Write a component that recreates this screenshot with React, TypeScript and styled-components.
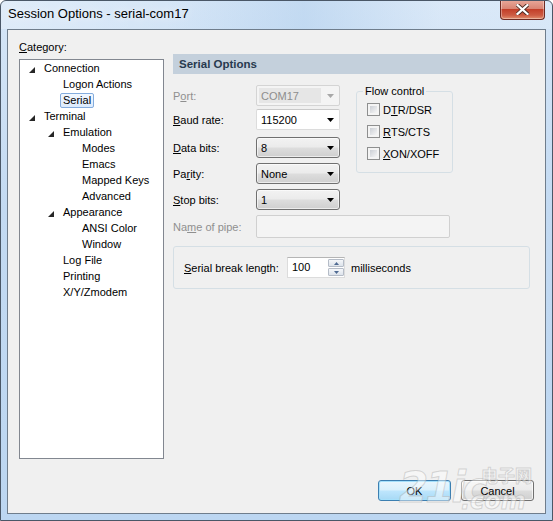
import React from 'react';
import styled, { createGlobalStyle, css } from 'styled-components';

const GlobalStyle = createGlobalStyle`
  html, body {
    margin: 0;
    padding: 0;
    background: #ffffff;
  }
  body {
    font-family: "Liberation Sans", Arial, sans-serif;
    font-size: 11px;
    color: #000000;
  }
  * {
    box-sizing: border-box;
  }
`;

const Window = styled.div`
  position: relative;
  width: 553px;
  height: 521px;
  display: flex;
  flex-direction: column;
  border: 1px solid #4a5767;
  border-radius: 6px 6px 0 0;
  background: linear-gradient(180deg, #d6e6f7 0%, #c3daf2 40%, #bcd6f1 100%);
  overflow: hidden;
`;

const TitleBar = styled.div`
  height: 28px;
  display: flex;
  align-items: flex-start;
  padding-left: 7px;
  background: linear-gradient(90deg, rgba(255, 255, 255, 0.25) 0%, rgba(255, 255, 255, 0) 30%, rgba(160, 196, 232, 0.35) 55%, rgba(255, 255, 255, 0.1) 80%);
`;

const Title = styled.span`
  margin-top: 5px;
  font-size: 13px;
  color: #000000;
  text-shadow: 0 0 8px rgba(255, 255, 255, 0.9);
`;

const CloseButton = styled.div`
  margin-left: auto;
  margin-right: 7px;
  margin-top: -1px;
  width: 45px;
  height: 20px;
  display: flex;
  align-items: center;
  justify-content: center;
  border: 1px solid #6e2a22;
  border-top: none;
  border-radius: 0 0 4px 4px;
  background: linear-gradient(180deg, #e9a99b 0%, #d98574 45%, #c33f29 50%, #cd5b43 80%, #e28f6e 100%);
  box-shadow: inset 0 0 0 1px rgba(255, 255, 255, 0.35);
`;

const Client = styled.div`
  flex: 1;
  margin: 0 6px 6px 6px;
  border: 1px solid #6f7d8c;
  background: #f0f0f0;
  display: flex;
  flex-direction: column;
  padding: 10px 11px 12px 11px;
`;

const Main = styled.div`
  display: flex;
  gap: 9px;
`;

const LeftCol = styled.div`
  width: 145px;
  display: flex;
  flex-direction: column;
`;

const CategoryLabel = styled.div`
  height: 14px;
  line-height: 14px;
  margin-bottom: 5px;
`;

const Tree = styled.div`
  height: 400px;
  border: 1px solid #828790;
  background: #ffffff;
`;

const TreeRow = styled.div<{ $level: number }>`
  height: 16px;
  display: flex;
  align-items: center;
  padding-left: ${p => 24 + p.$level * 19}px;
  position: relative;
`;

const Expander = styled.svg<{ $level: number }>`
  position: absolute;
  left: ${p => 9 + p.$level * 19}px;
  top: 7px;
`;

const TreeText = styled.span<{ $selected?: boolean }>`
  display: inline-block;
  height: 15px;
  line-height: 13px;
  padding: 0 2px;
  margin-left: -3px;
  border: 1px solid transparent;
  border-radius: 2px;
  white-space: nowrap;
  ${p =>
    p.$selected &&
    css`
      border-color: #84acdd;
      background: linear-gradient(180deg, #f2f8ff 0%, #dcebfd 100%);
    `}
`;

const RightCol = styled.div`
  width: 357px;
  margin-top: 14px;
  display: flex;
  flex-direction: column;
`;

const Header = styled.div`
  height: 20px;
  line-height: 20px;
  padding-left: 6px;
  background: #c4d0dc;
  font-weight: bold;
  font-size: 11.5px;
  color: #283a4f;
`;

const TopSection = styled.div`
  display: flex;
  align-items: flex-start;
  margin-top: 11px;
`;

const Form = styled.div`
  width: 167px;
  display: flex;
  flex-direction: column;
`;

const FieldRow = styled.div<{ $mt?: number }>`
  display: flex;
  align-items: center;
  margin-top: ${p => p.$mt ?? 0}px;
`;

const Label = styled.span<{ $disabled?: boolean; $width?: number }>`
  width: ${p => p.$width ?? 83}px;
  flex-shrink: 0;
  color: ${p => (p.$disabled ? '#8f8f8f' : '#000000')};
  white-space: nowrap;
`;

const Key = styled.span`
  text-decoration: underline;
  text-underline-offset: 1px;
`;

const Combo = styled.div<{ $variant: 'disabled' | 'edit' | 'button' }>`
  width: 84px;
  height: 21px;
  display: flex;
  align-items: center;
  position: relative;
  padding-left: 4px;
  ${p =>
    p.$variant === 'disabled' &&
    css`
      border: 1px solid #d4d4d4;
      border-radius: 2px;
      background: #f4f4f4;
      color: #8d8d8d;
      padding-left: 2px;
    `}
  ${p =>
    p.$variant === 'edit' &&
    css`
      border: 1px solid #dcdcdc;
      border-top-color: #c9c9c9;
      border-radius: 2px;
      background: #ffffff;
    `}
  ${p =>
    p.$variant === 'button' &&
    css`
      border: 1px solid #707070;
      border-radius: 3px;
      background: linear-gradient(180deg, #f2f2f2 0%, #ebebeb 48%, #dddddd 52%, #cfcfcf 100%);
      box-shadow: inset 0 0 0 1px rgba(255, 255, 255, 0.6);
    `}
`;

const DisabledText = styled.span`
  display: flex;
  align-items: center;
  width: 62px;
  height: 15px;
  padding-left: 2px;
  background: #e6e6e6;
`;

const Arrow = styled.svg`
  position: absolute;
  right: 5px;
  top: 8px;
`;

const PipeInput = styled.div`
  width: 194px;
  height: 23px;
  border: 1px solid #d0d0d0;
  border-radius: 2px;
  background: #f4f4f4;
`;

const FlowGroup = styled.fieldset`
  width: 97px;
  height: 88px;
  margin: 0 0 0 16px;
  padding: 5px 0 0 10px;
  border: 1px solid #d5dfe5;
  border-radius: 3px;
  display: flex;
  flex-direction: column;
`;

const Legend = styled.legend`
  padding: 0 2px;
  margin-left: -4px;
  line-height: 13px;
`;

const CheckRow = styled.label<{ $mt?: number }>`
  display: flex;
  align-items: center;
  height: 13px;
  margin-top: ${p => p.$mt ?? 0}px;
`;

const CheckBox = styled.span`
  width: 13px;
  height: 13px;
  border: 1px solid #8e8f8f;
  padding: 2px;
  margin-right: 3px;
  background: #f4f4f4;
  &::after {
    content: '';
    display: block;
    width: 100%;
    height: 100%;
    background: linear-gradient(135deg, #cbcfd5 0%, #e9eaec 70%, #f6f6f6 100%);
  }
`;

const PipeRow = styled(FieldRow)`
  margin-top: 5px;
`;

const BreakGroup = styled.div`
  margin-top: 8px;
  height: 43px;
  border: 1px solid #d5dfe5;
  border-radius: 3px;
  display: flex;
  align-items: center;
  padding-left: 10px;
`;

const SpinBox = styled.div`
  width: 58px;
  height: 21px;
  display: flex;
  border: 1px solid #dcdcdc;
  border-top-color: #b5b5b5;
  background: #ffffff;
`;

const SpinText = styled.span`
  flex: 1;
  padding-left: 4px;
  line-height: 19px;
`;

const SpinButtons = styled.div`
  width: 16px;
  display: flex;
  flex-direction: column;
  gap: 1px;
  padding: 1px 0 1px 0;
`;

const SpinButton = styled.div`
  flex: 1;
  display: flex;
  align-items: center;
  justify-content: center;
  border: 1px solid #b5bcc7;
  border-radius: 1px;
  background: linear-gradient(180deg, #f5f7fa 0%, #dde3eb 100%);
`;

const Units = styled.span`
  margin-left: 6px;
`;

const ButtonRow = styled.div`
  margin-top: 21px;
  display: flex;
  justify-content: flex-end;
  gap: 10px;
`;

const DialogButton = styled.div<{ $default?: boolean }>`
  width: 73px;
  height: 21px;
  display: flex;
  align-items: center;
  justify-content: center;
  border-radius: 3px;
  ${p =>
    p.$default
      ? css`
          border: 1px solid #3c7fb1;
          background: linear-gradient(180deg, #e9f6fd 0%, #d9f0fc 48%, #bee6fd 52%, #a7d9f5 100%);
          box-shadow: inset 0 0 0 1px #a6e0fb;
        `
      : css`
          border: 1px solid #707070;
          background: linear-gradient(180deg, #f2f2f2 0%, #ebebeb 48%, #dddddd 52%, #cfcfcf 100%);
          box-shadow: inset 0 0 0 1px rgba(255, 255, 255, 0.7);
        `}
`;

/* faint site watermark lying over the bottom-right corner */
const Watermark = styled.div`
  position: absolute;
  left: 398px;
  top: 458px;
  width: 154px;
  height: 62px;
  pointer-events: none;
  white-space: nowrap;
  color: rgba(255, 255, 255, 0.45);
  -webkit-text-stroke: 1px rgba(170, 170, 170, 0.45);
  font-family: "DejaVu Sans", sans-serif;
  font-weight: bold;
`;

const WmBig = styled.span`
  position: absolute;
  left: 0;
  top: 4px;
  font-size: 42px;
  font-style: italic;
  letter-spacing: -3px;
`;

const WmCn = styled.span`
  position: absolute;
  left: 82px;
  top: 3px;
  font-size: 17px;
  font-family: "Noto Sans CJK SC", sans-serif;
`;

const WmCom = styled.span`
  position: absolute;
  left: 62px;
  top: 28px;
  font-size: 24px;
  font-style: italic;
`;

type Node = { label: string; level: number; expanded?: boolean; selected?: boolean };

const nodes: Node[] = [
  { label: 'Connection', level: 0, expanded: true },
  { label: 'Logon Actions', level: 1 },
  { label: 'Serial', level: 1, selected: true },
  { label: 'Terminal', level: 0, expanded: true },
  { label: 'Emulation', level: 1, expanded: true },
  { label: 'Modes', level: 2 },
  { label: 'Emacs', level: 2 },
  { label: 'Mapped Keys', level: 2 },
  { label: 'Advanced', level: 2 },
  { label: 'Appearance', level: 1, expanded: true },
  { label: 'ANSI Color', level: 2 },
  { label: 'Window', level: 2 },
  { label: 'Log File', level: 1 },
  { label: 'Printing', level: 1 },
  { label: 'X/Y/Zmodem', level: 1 },
];

const DownArrow = ({ color = '#000' }: { color?: string }) => (
  <Arrow width="7" height="4" viewBox="0 0 7 4">
    <polygon points="0,0 7,0 3.5,4" fill={color} />
  </Arrow>
);

const App: React.FC = () => {
  return (
    <>
      <GlobalStyle />
      <Window>
        <TitleBar>
          <Title>Session Options - serial-com17</Title>
          <CloseButton>
            <svg width="13" height="11" viewBox="0 0 13 11">
              <path
                d="M1.5 1 L11.5 10 M11.5 1 L1.5 10"
                stroke="#4b2a22"
                strokeWidth="4"
                strokeLinecap="square"
              />
              <path
                d="M1.5 1 L11.5 10 M11.5 1 L1.5 10"
                stroke="#ffffff"
                strokeWidth="2.2"
                strokeLinecap="square"
              />
            </svg>
          </CloseButton>
        </TitleBar>
        <Client>
          <Main>
            <LeftCol>
              <CategoryLabel>
                <Key>C</Key>ategory:
              </CategoryLabel>
              <Tree>
                {nodes.map(n => (
                  <TreeRow key={n.label} $level={n.level}>
                    {n.expanded && (
                      <Expander $level={n.level} width="6" height="6" viewBox="0 0 6 6">
                        <polygon points="6,0 6,6 0,6" fill="#262626" />
                      </Expander>
                    )}
                    <TreeText $selected={n.selected}>{n.label}</TreeText>
                  </TreeRow>
                ))}
              </Tree>
            </LeftCol>
            <RightCol>
              <Header>Serial Options</Header>
              <TopSection>
                <Form>
                  <FieldRow>
                    <Label $disabled>
                      P<Key>o</Key>rt:
                    </Label>
                    <Combo $variant="disabled">
                      <DisabledText>COM17</DisabledText>
                      <DownArrow color="#a8a8a8" />
                    </Combo>
                  </FieldRow>
                  <FieldRow $mt={3}>
                    <Label>
                      <Key>B</Key>aud rate:
                    </Label>
                    <Combo $variant="edit">
                      115200
                      <DownArrow />
                    </Combo>
                  </FieldRow>
                  <FieldRow $mt={7}>
                    <Label>
                      <Key>D</Key>ata bits:
                    </Label>
                    <Combo $variant="button">
                      8
                      <DownArrow />
                    </Combo>
                  </FieldRow>
                  <FieldRow $mt={5}>
                    <Label>
                      Pa<Key>r</Key>ity:
                    </Label>
                    <Combo $variant="button">
                      None
                      <DownArrow />
                    </Combo>
                  </FieldRow>
                  <FieldRow $mt={5}>
                    <Label>
                      <Key>S</Key>top bits:
                    </Label>
                    <Combo $variant="button">
                      1
                      <DownArrow />
                    </Combo>
                  </FieldRow>
                </Form>
                <FlowGroup>
                  <Legend>Flow control</Legend>
                  <CheckRow $mt={0}>
                    <CheckBox />
                    D<Key>T</Key>R/DSR
                  </CheckRow>
                  <CheckRow $mt={9}>
                    <CheckBox />
                    <Key>R</Key>TS/CTS
                  </CheckRow>
                  <CheckRow $mt={9}>
                    <CheckBox />
                    <Key>X</Key>ON/XOFF
                  </CheckRow>
                </FlowGroup>
              </TopSection>
              <PipeRow>
                <Label $disabled>
                  Na<Key>m</Key>e of pipe:
                </Label>
                <PipeInput />
              </PipeRow>
              <BreakGroup>
                <Label $width={103}>
                  <Key>S</Key>erial break length:
                </Label>
                <SpinBox>
                  <SpinText>100</SpinText>
                  <SpinButtons>
                    <SpinButton>
                      <svg width="5" height="3" viewBox="0 0 5 3">
                        <polygon points="0,3 5,3 2.5,0" fill="#4f6a92" />
                      </svg>
                    </SpinButton>
                    <SpinButton>
                      <svg width="5" height="3" viewBox="0 0 5 3">
                        <polygon points="0,0 5,0 2.5,3" fill="#4f6a92" />
                      </svg>
                    </SpinButton>
                  </SpinButtons>
                </SpinBox>
                <Units>milliseconds</Units>
              </BreakGroup>
            </RightCol>
          </Main>
          <ButtonRow>
            <DialogButton $default>OK</DialogButton>
            <DialogButton>Cancel</DialogButton>
          </ButtonRow>
        </Client>
        <Watermark>
          <WmBig>21ic</WmBig>
          <WmCn>电子网</WmCn>
          <WmCom>.com</WmCom>
        </Watermark>
      </Window>
    </>
  );
};

export default App;
